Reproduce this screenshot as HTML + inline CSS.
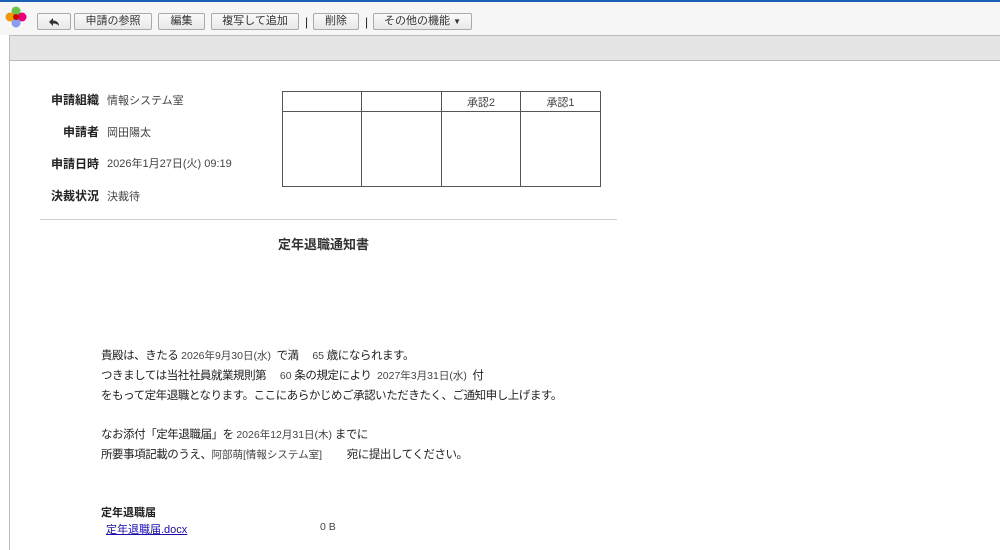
<!DOCTYPE html>
<html><head><meta charset="utf-8"><style>
*{margin:0;padding:0;box-sizing:border-box}
body{width:1000px;height:550px;overflow:hidden;background:#fff;font-family:"Liberation Sans","Noto Sans CJK JP",sans-serif;color:#222;position:relative}
.a{position:absolute;white-space:nowrap}
.btn{position:absolute;top:13px;height:17px;border:1px solid #aaa;border-radius:2px;background:linear-gradient(#fafafa,#e8e8e8);font-size:11px;line-height:15px;text-align:center;color:#333}
.lbl{font-size:12px;font-weight:bold;text-align:right;width:60px;left:39px}
.val{font-size:11px;color:#444;left:107px}
.t{font-size:11.5px;color:#222;letter-spacing:-0.45px}
.v{font-size:10.5px;color:#444;letter-spacing:0}
td{border:1px solid #555;font-size:11px;color:#444;text-align:center}
</style></head><body>
<div class="a" style="left:0;top:0;width:1000px;height:2px;background:#1a5fb4"></div>
<div class="a" style="left:0;top:2px;width:1000px;height:33px;background:#f6f6f6"></div>
<svg class="a" style="left:4px;top:5px" width="24" height="24" viewBox="0 0 24 24"><circle cx="12" cy="6" r="4.5" fill="#6cc24a"/><circle cx="6" cy="12" r="4.5" fill="#f39800"/><circle cx="18" cy="12" r="4.5" fill="#e4007f"/><circle cx="12" cy="18" r="4.5" fill="#8c9cf0"/><circle cx="12" cy="12" r="3" fill="#c00"/></svg>
<div class="btn" style="left:37px;width:34px"><svg width="12" height="10" viewBox="0 0 12 10" style="margin-top:3px"><path d="M5 1 L1 5 L5 9 V6.5 C8 6.5 10 7.5 11 9 C11 5.5 8.5 3.5 5 3.5Z" fill="#333"/></svg></div>
<div class="btn" style="left:74px;width:78px">申請の参照</div>
<div class="btn" style="left:158px;width:47px">編集</div>
<div class="btn" style="left:211px;width:88px">複写して追加</div>
<div class="a" style="left:305px;top:15px;font-size:12px">|</div>
<div class="btn" style="left:313px;width:46px">削除</div>
<div class="a" style="left:365px;top:15px;font-size:12px">|</div>
<div class="btn" style="left:373px;width:99px">その他の機能 <span style="font-size:8px">▼</span></div>
<div class="a" style="left:9px;top:35px;width:991px;height:26px;background:#e5e5e5;border:1px solid #bbb;border-right:none"></div>
<div class="a" style="left:9px;top:61px;width:1px;height:489px;background:#bbb"></div>

<div class="a lbl" style="top:91px">申請組織</div><div class="a val" style="top:92px">情報システム室</div>
<div class="a lbl" style="top:123px">申請者</div><div class="a val" style="top:124px">岡田陽太</div>
<div class="a lbl" style="top:155px">申請日時</div><div class="a val" style="top:155px">2026年1月27日(火) 09:19</div>
<div class="a lbl" style="top:187px">決裁状況</div><div class="a val" style="top:188px">決裁待</div>

<table class="a" style="left:282px;top:91px;width:319px;height:96px;border-collapse:collapse">
<tr style="height:20px"><td style="width:79px"></td><td style="width:80px"></td><td style="width:79px">承認2</td><td>承認1</td></tr>
<tr><td></td><td></td><td></td><td></td></tr></table>

<div class="a" style="left:40px;top:219px;width:577px;height:1px;background:#ccc"></div>
<div class="a" style="left:278px;top:234px;font-size:13px;font-weight:bold;color:#333">定年退職通知書</div>

<div class="a t" style="left:101px;top:347px">貴殿は、きたる <span class="v">2026年9月30日(水)</span> &nbsp;で満 &nbsp;&nbsp;&nbsp;&nbsp;<span class="v">65</span> 歳になられます。</div>
<div class="a t" style="left:101px;top:367px">つきましては当社社員就業規則第 &nbsp;&nbsp;&nbsp;&nbsp;<span class="v">60</span> 条の規定により &nbsp;<span class="v">2027年3月31日(水)</span> &nbsp;付</div>
<div class="a t" style="left:101px;top:387px">をもって定年退職となります。ここにあらかじめご承認いただきたく、ご通知申し上げます。</div>
<div class="a t" style="left:101px;top:426px">なお添付「定年退職届」を <span class="v">2026年12月31日(木)</span> までに</div>
<div class="a t" style="left:101px;top:446px">所要事項記載のうえ、<span class="v">阿部萌[情報システム室]</span> &nbsp;&nbsp;&nbsp;&nbsp;&nbsp;&nbsp;&nbsp;&nbsp;宛に提出してください。</div>
<div class="a" style="left:101px;top:504px;font-size:11px;font-weight:bold">定年退職届</div>
<div class="a" style="left:106px;top:521px;font-size:11px;color:#1a0dab;text-decoration:underline">定年退職届.docx</div>
<div class="a v" style="left:320px;top:521px">0 B</div>
</body></html>
